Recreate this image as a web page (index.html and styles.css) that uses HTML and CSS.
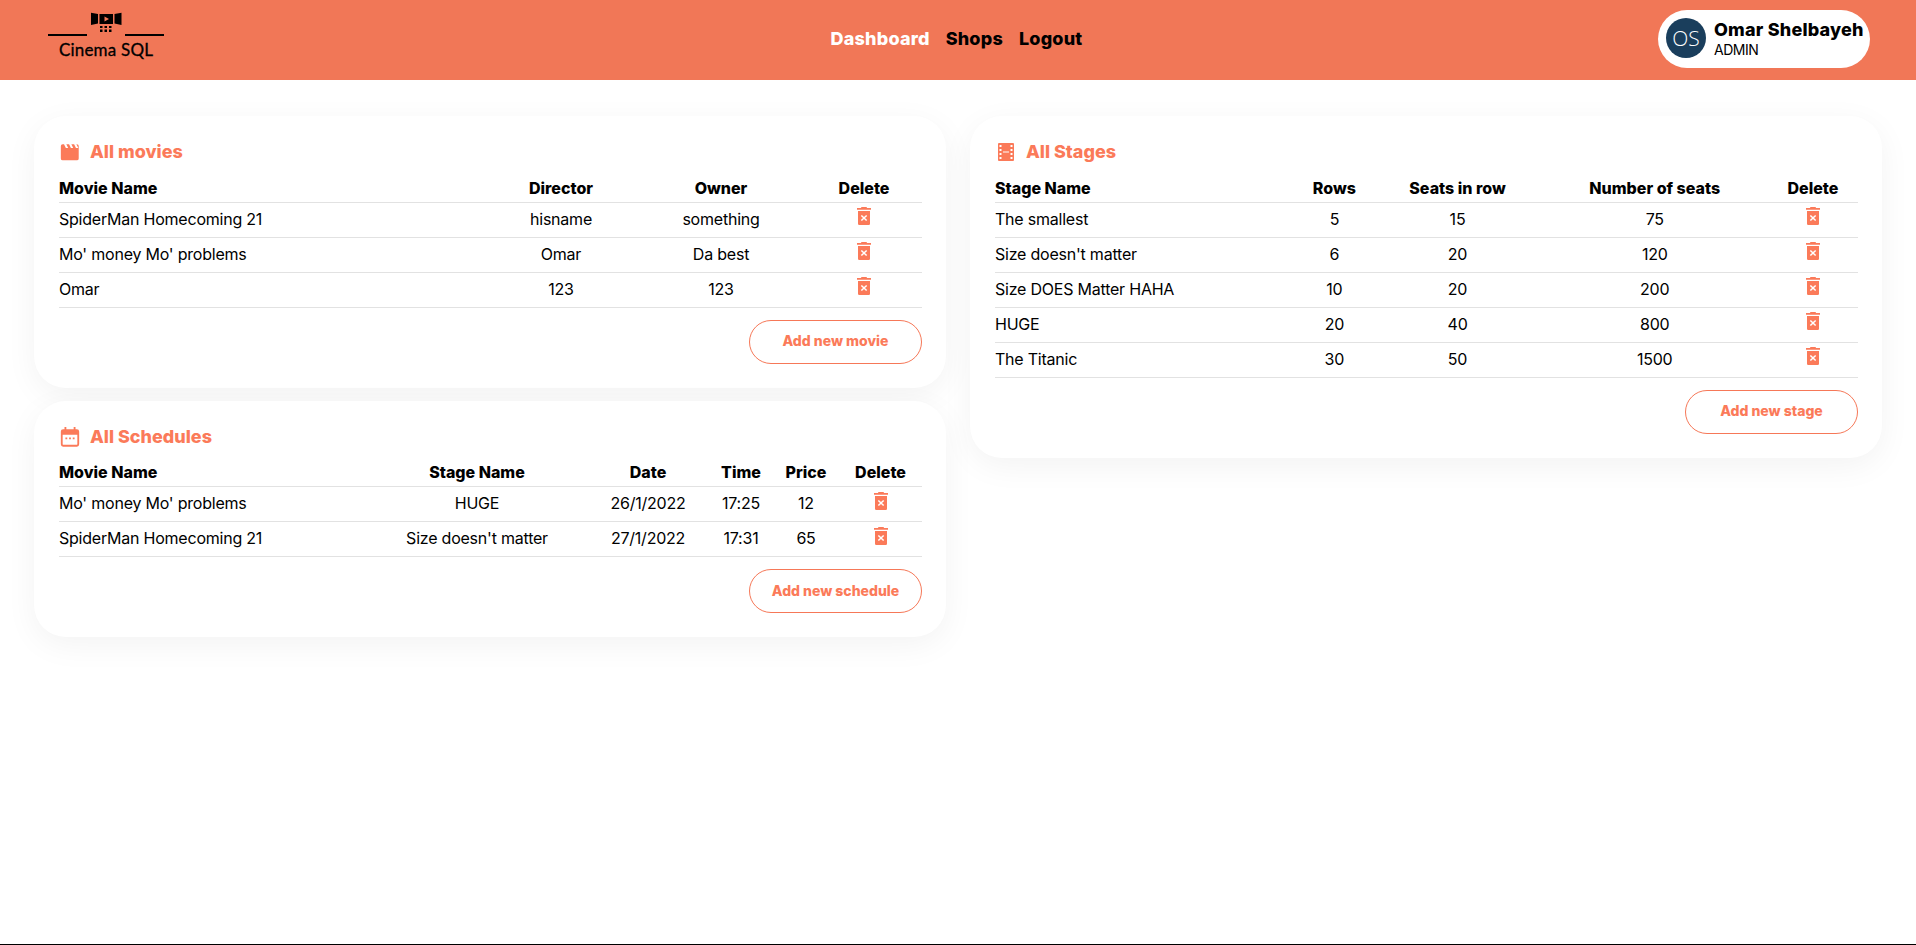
FILE: index.html
```html
<!DOCTYPE html>
<html lang="en">
<head>
<meta charset="utf-8">
<title>Cinema SQL</title>
<link rel="stylesheet" href="styles.css">
</head>
<body>
<svg class="sprite" width="0" height="0" aria-hidden="true">
  <symbol id="trash" viewBox="0 0 14 18">
    <path d="M4.500 0h5l.6 1H14v1.800H0V1h3.900zM1 4h12v12.800q0 1.200-1.200 1.200H2.200Q1 18 1 16.800zM4.900 8l-1.100 1.100L6 11l-2.200 1.900L4.900 14 7 12.100 9.100 14l1.100-1.100L8 11l2.200-1.900L9.100 8 7 9.900z" fill-rule="evenodd"/>
  </symbol>
</svg>
<header class="topbar">
  <div class="logo">
    <svg class="logo-mark" viewBox="0 0 116 24" width="116" height="24">
      <path d="M43 .7l7 1.300v9.500l-7 1.500zM51.500 2H65v10H51.500zM66.500 2l7-1.300V13l-7-1.500z" fill="#000"/>
      <path d="M56.500 4.500l4.500 2.500-4.500 2.500z" fill="#f17757"/>
      <path d="M52 14h2.500v2H52zM56.500 14H59v2h-2.500zM61 14h2.500v2H61zM52 17.500h2.500V20H52zM56.500 17.500H59V20h-2.500zM61 17.500h2.500V20H61z" fill="#000"/>
      <path d="M0 23h39M77 23h39" stroke="#000" stroke-width="2" fill="none"/>
    </svg>
    <span class="logo-text">Cinema SQL</span>
  </div>
  <nav class="nav">
    <a class="nav-link active">Dashboard</a>
    <a class="nav-link">Shops</a>
    <a class="nav-link">Logout</a>
  </nav>
  <div class="user">
    <span class="avatar">OS</span>
    <span class="user-info">
      <span class="user-name">Omar Shelbayeh</span>
      <span class="user-role">ADMIN</span>
    </span>
  </div>
</header>
<main class="content">
  <div class="column">
    <section class="card">
      <h2 class="card-title">
        <svg class="title-icon" viewBox="0 0 24 24"><path d="M2 5.500Q2 3.500 4 3.500h1.500l2 4h2.500l-2-4h3l2 4h2.500l-2-4h3l2 4h2.500l-2-4h.5q2 0 2 2V19q0 2-2 2H4q-2 0-2-2z"/></svg>
        All movies
      </h2>
      <table class="table">
        <colgroup><col class="m1"><col class="m2"><col class="m3"><col class="m4"></colgroup>
        <thead><tr><th class="left">Movie Name</th><th>Director</th><th>Owner</th><th>Delete</th></tr></thead>
        <tbody>
          <tr><td class="left">SpiderMan Homecoming 21</td><td>hisname</td><td>something</td><td><svg class="trash"><use href="#trash"/></svg></td></tr>
          <tr><td class="left">Mo' money Mo' problems</td><td>Omar</td><td>Da best</td><td><svg class="trash"><use href="#trash"/></svg></td></tr>
          <tr><td class="left">Omar</td><td>123</td><td>123</td><td><svg class="trash"><use href="#trash"/></svg></td></tr>
        </tbody>
      </table>
      <div class="actions"><button class="btn">Add new movie</button></div>
    </section>
    <section class="card">
      <h2 class="card-title">
        <svg class="title-icon" viewBox="0 0 24 24"><path fill-rule="evenodd" d="M6 1h2v2.500h8V1h2v2.500h1.500q2.500 0 2.500 2.500v14q0 2.500-2.500 2.500h-15Q2 22.500 2 20V6q0-2.500 2.500-2.500H6zM4 9.500V20q0 .5.5.5h15q.5 0 .5-.5V9.500zM7 12.500h2v2H7zM11 12.500h2v2h-2zM15 12.500h2v2h-2z"/></svg>
        All Schedules
      </h2>
      <table class="table">
        <colgroup><col class="s1"><col class="s2"><col class="s3"><col class="s4"><col class="s5"><col class="s6"></colgroup>
        <thead><tr><th class="left">Movie Name</th><th>Stage Name</th><th>Date</th><th>Time</th><th>Price</th><th>Delete</th></tr></thead>
        <tbody>
          <tr><td class="left">Mo' money Mo' problems</td><td>HUGE</td><td>26/1/2022</td><td>17:25</td><td>12</td><td><svg class="trash"><use href="#trash"/></svg></td></tr>
          <tr><td class="left">SpiderMan Homecoming 21</td><td>Size doesn't matter</td><td>27/1/2022</td><td>17:31</td><td>65</td><td><svg class="trash"><use href="#trash"/></svg></td></tr>
        </tbody>
      </table>
      <div class="actions"><button class="btn">Add new schedule</button></div>
    </section>
  </div>
  <div class="column">
    <section class="card">
      <h2 class="card-title">
        <svg class="title-icon" viewBox="0 0 22 22"><path fill-rule="evenodd" d="M4 2h14q1 0 1 1v16q0 1-1 1H4q-1 0-1-1V3q0-1 1-1zM4.500 4v2h2V4zM15.500 4v2h2V4zM4.500 8v2h2V8zM15.500 8v2h2V8zM4.500 12v2h2v-2zM15.500 12v2h2v-2zM4.500 16v2h2v-2zM15.500 16v2h2v-2zM8 10.500v1h6v-1z"/></svg>
        All Stages
      </h2>
      <table class="table">
        <colgroup><col class="t1"><col class="t2"><col class="t3"><col class="t4"><col class="t5"></colgroup>
        <thead><tr><th class="left">Stage Name</th><th>Rows</th><th>Seats in row</th><th>Number of seats</th><th>Delete</th></tr></thead>
        <tbody>
          <tr><td class="left">The smallest</td><td>5</td><td>15</td><td>75</td><td><svg class="trash"><use href="#trash"/></svg></td></tr>
          <tr><td class="left">Size doesn't matter</td><td>6</td><td>20</td><td>120</td><td><svg class="trash"><use href="#trash"/></svg></td></tr>
          <tr><td class="left">Size DOES Matter HAHA</td><td>10</td><td>20</td><td>200</td><td><svg class="trash"><use href="#trash"/></svg></td></tr>
          <tr><td class="left">HUGE</td><td>20</td><td>40</td><td>800</td><td><svg class="trash"><use href="#trash"/></svg></td></tr>
          <tr><td class="left">The Titanic</td><td>30</td><td>50</td><td>1500</td><td><svg class="trash"><use href="#trash"/></svg></td></tr>
        </tbody>
      </table>
      <div class="actions"><button class="btn">Add new stage</button></div>
    </section>
  </div>
</main>
<footer class="bottom-line"></footer>
</body>
</html>
```

FILE: styles.css
```css
* { box-sizing: border-box; }
html, body { height: 100%; }
body {
  margin: 0;
  display: flex;
  flex-direction: column;
  background: #fff;
  color: #000;
  font-family: Inter, "Liberation Sans", sans-serif;
  font-size: 16px;
  overflow: hidden;
}
.sprite { position: absolute; }
.topbar {
  height: 80px;
  flex: none;
  background: #f17757;
  display: grid;
  grid-template-columns: 1fr auto 1fr;
  align-items: center;
  padding: 0 46px 0 48px;
}
.logo {
  display: flex;
  flex-direction: column;
  align-items: center;
  width: 116px;
  margin-top: -8px;
}
.logo-mark { display: block; }
.logo-text {
  font-family: Lato, sans-serif;
  font-size: 17px;
  line-height: 20px;
  margin-top: 4px;
  letter-spacing: 0.2px;
  white-space: nowrap;
  -webkit-text-stroke: 0.3px #000;
}
.nav { display: flex; gap: 16px; margin: -4px 5px 0 0; }
.nav-link { font-weight: 800; font-size: 18px; letter-spacing: 0.2px; color: #000; }
.nav-link.active { color: #fff; }
.user {
  justify-self: end;
  display: flex;
  align-items: center;
  gap: 8px;
  width: 212px;
  height: 58px;
  margin-top: -2px;
  padding-left: 8px;
  background: #fff;
  border-radius: 29px;
}
.avatar {
  flex: none;
  width: 40px;
  height: 40px;
  margin-top: -2px;
  border-radius: 50%;
  background: #1a3e5c;
  color: #fff;
  font-family: "Open Sans", sans-serif;
  font-weight: 300;
  font-size: 21px;
  display: flex;
  align-items: center;
  justify-content: center;
}
.user-info { display: flex; flex-direction: column; }
.user-name { font-weight: 800; font-size: 18px; letter-spacing: 0.2px; line-height: 22px; white-space: nowrap; }
.user-role { font-size: 14px; letter-spacing: -0.5px; line-height: 18px; }
.content {
  flex: 1;
  display: grid;
  grid-template-columns: 912px 912px;
  gap: 24px;
  padding: 36px 34px 0;
  align-items: start;
}
.column { display: flex; flex-direction: column; gap: 13px; }
.card {
  background: #fff;
  border-radius: 32px;
  padding: 25px 24px 24px 25px;
  box-shadow: 0 8px 32px rgba(0, 0, 0, 0.05);
}
.card-title {
  margin: 0 0 14px;
  display: flex;
  align-items: center;
  gap: 9px;
  color: #fb7a59;
  font-size: 18px;
  line-height: 22px;
  font-weight: 800;
}
.title-icon { width: 22px; height: 22px; fill: #fb7a59; flex: none; }
.table { width: 100%; table-layout: fixed; border-collapse: collapse; }
.table th, .table td { text-align: center; padding: 0; border-bottom: 1px solid #e2e2e2; }
.table th { font-weight: 800; height: 25px; padding-bottom: 3px; }
.table td { height: 35px; padding-bottom: 2px; letter-spacing: -0.22px; }
.table .left { text-align: left; }
.m1 { width: 427px; } .m2 { width: 150px; } .m3 { width: 170px; } .m4 { width: 116px; }
.s1 { width: 308px; } .s2 { width: 220px; } .s3 { width: 122px; } .s4 { width: 64px; } .s5 { width: 66px; } .s6 { width: 83px; }
.t1 { width: 300px; } .t2 { width: 78px; } .t3 { width: 168px; } .t4 { width: 226px; } .t5 { width: 90px; }
.trash { width: 14px; height: 18px; fill: #fb7a59; display: block; margin: -5px auto 0; }
.actions { display: flex; justify-content: flex-end; margin-top: 12px; }
.btn {
  width: 173px;
  height: 44px;
  padding: 0 0 2px;
  border: 1px solid #f67858;
  border-radius: 22px;
  background: #fff;
  color: #fb7a59;
  font-family: inherit;
  font-weight: 800;
  font-size: 14px;
}
.bottom-line { flex: none; height: 1px; background: #000; }
```
